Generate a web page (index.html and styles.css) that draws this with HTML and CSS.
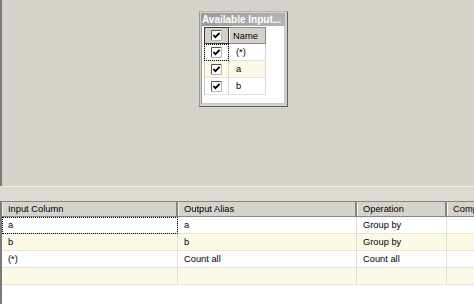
FILE: index.html
```
<!DOCTYPE html>
<html>
<head>
<meta charset="utf-8">
<link rel="stylesheet" href="styles.css">
</head>
<body>
<div class="designer">
  <div class="canvas">
    <div class="node">
      <div class="node-title">Available Input...</div>
      <div class="node-body">
        <div class="cols">
          <div class="ch ch-check"><svg class="cb" width="11" height="11" viewBox="0 0 11 11"><rect x="0" y="0" width="11" height="11" fill="#fff"/><path d="M0.5 10.5 V0.5 H10.5" fill="none" stroke="#555"/><path d="M10.5 0.5 V10.5 H0.5" fill="none" stroke="#b8b5ae"/><polyline points="2.4,5 4.4,7.2 8.6,2.8" fill="none" stroke="#000" stroke-width="1.8"/></svg></div>
          <div class="ch ch-name">Name</div>

          <div class="cc cc-check focus"><svg class="cb" width="11" height="11" viewBox="0 0 11 11"><rect x="0" y="0" width="11" height="11" fill="#fff"/><path d="M0.5 10.5 V0.5 H10.5" fill="none" stroke="#555"/><path d="M10.5 0.5 V10.5 H0.5" fill="none" stroke="#b8b5ae"/><polyline points="2.4,5 4.4,7.2 8.6,2.8" fill="none" stroke="#000" stroke-width="1.8"/></svg></div>
          <div class="cc cc-name">(*)</div>

          <div class="cc cc-check alt"><svg class="cb" width="11" height="11" viewBox="0 0 11 11"><rect x="0" y="0" width="11" height="11" fill="#fff"/><path d="M0.5 10.5 V0.5 H10.5" fill="none" stroke="#555"/><path d="M10.5 0.5 V10.5 H0.5" fill="none" stroke="#b8b5ae"/><polyline points="2.4,5 4.4,7.2 8.6,2.8" fill="none" stroke="#000" stroke-width="1.8"/></svg></div>
          <div class="cc cc-name alt">a</div>

          <div class="cc cc-check"><svg class="cb" width="11" height="11" viewBox="0 0 11 11"><rect x="0" y="0" width="11" height="11" fill="#fff"/><path d="M0.5 10.5 V0.5 H10.5" fill="none" stroke="#555"/><path d="M10.5 0.5 V10.5 H0.5" fill="none" stroke="#b8b5ae"/><polyline points="2.4,5 4.4,7.2 8.6,2.8" fill="none" stroke="#000" stroke-width="1.8"/></svg></div>
          <div class="cc cc-name">b</div>
        </div>
      </div>
    </div>
  </div>
  <div class="splitter"></div>
  <div class="grid-pane">
    <div class="grid">
      <div class="gh">Input Column</div>
      <div class="gh">Output Alias</div>
      <div class="gh">Operation</div>
      <div class="gh">Comparison Flags</div>

      <div class="gc focus">a</div>
      <div class="gc">a</div>
      <div class="gc">Group by</div>
      <div class="gc"></div>

      <div class="gc alt">b</div>
      <div class="gc alt">b</div>
      <div class="gc alt">Group by</div>
      <div class="gc alt"></div>

      <div class="gc">(*)</div>
      <div class="gc">Count all</div>
      <div class="gc">Count all</div>
      <div class="gc"></div>

      <div class="gc alt"></div>
      <div class="gc alt"></div>
      <div class="gc alt"></div>
      <div class="gc alt"></div>
    </div>
  </div>
</div>
</body>
</html>
```
FILE: styles.css
```
html, body {
  margin: 0;
  padding: 0;
  width: 474px;
  height: 304px;
  overflow: hidden;
  background: #fff;
  font-family: "Liberation Sans", Arial, sans-serif;
  font-size: 9.3px;
  color: #000;
}

.designer {
  display: flex;
  flex-direction: column;
  height: 304px;
}

.canvas {
  flex: none;
  height: 186px;
  box-sizing: border-box;
  background: #d5d2cc;
  border-left: 2px solid #7b7b7b;
  position: relative;
}

.node {
  position: absolute;
  left: 197px;
  top: 11px;
  width: 89px;
  height: 96px;
  box-sizing: border-box;
  background: #d4d0c8;
  border: 1px solid;
  border-color: #bcb9b3 #5f5f5f #5f5f5f #9a9a9a;
  padding: 1px 2px 2px 1px;
  display: flex;
  flex-direction: column;
}

.node-title {
  flex: none;
  height: 13px;
  line-height: 13px;
  padding-left: 1px;
  background: linear-gradient(to right, #9b9b9b, #b3b3b3);
  color: #fff;
  font-weight: bold;
  font-size: 10px;
  white-space: nowrap;
  overflow: hidden;
}

.node-body {
  flex: 1;
  background: #fff;
  border-left: 1px solid #9a9a9a;
  border-right: 1px solid #c8c8c8;
  border-bottom: 1px solid #c8c8c8;
  padding: 1px 0 0 2px;
}

.cols {
  display: grid;
  grid-template-columns: 25px 37px;
  grid-auto-rows: 17px;
}

.ch, .cc {
  box-sizing: border-box;
  display: flex;
  align-items: center;
}

.ch {
  background: #d4d0c8;
}

.ch-check {
  justify-content: center;
  border: 1px solid #3a3a3a;
}

.ch-name {
  padding-left: 4px;
  border-top: 1px solid #8a8a8a;
  border-right: 1px solid #8a8a8a;
  border-bottom: 1px solid #8a8a8a;
  box-shadow: inset 1px 0 0 #fff;
}

.cc {
  background: #fff;
  border-bottom: 1px solid #e2e2e2;
}

.cc-check {
  justify-content: center;
  border-left: 1px solid #c4c4c4;
  border-right: 1px solid #d6d6d6;
}

.cc-name {
  padding-left: 7px;
  border-right: 1px solid #d6d6d6;
}

.cc.alt {
  background: #fcfae6;
}

.cb {
  display: block;
}

.focus {
  outline: 1px dotted #000;
  outline-offset: -1px;
}

.splitter {
  flex: none;
  height: 15px;
  box-sizing: border-box;
  background: #dcd9d3;
  border-top: 1px solid #eeece8;
}

.grid-pane {
  flex: 1;
  background: #fff;
  border-left: 2px solid #7b7b7b;
  overflow: hidden;
}

.grid {
  display: grid;
  grid-template-columns: 176px 179px 90px 160px;
  grid-template-rows: 16px;
  grid-auto-rows: 17px;
  width: 605px;
}

.gh, .gc {
  box-sizing: border-box;
  display: flex;
  align-items: center;
  padding-left: 6px;
  white-space: nowrap;
  overflow: hidden;
}

.gh {
  background: #d6d3cd;
  border-top: 1px solid #858585;
  border-bottom: 1px solid #858585;
  border-right: 2px solid #858585;
  box-shadow: inset 1px 0 0 #f4f3f0;
}

.gc {
  background: #fff;
  border-right: 1px solid #dcdcdc;
  border-bottom: 1px solid #e4e2dc;
}

.gc.alt {
  background: #fcfae6;
}
```
